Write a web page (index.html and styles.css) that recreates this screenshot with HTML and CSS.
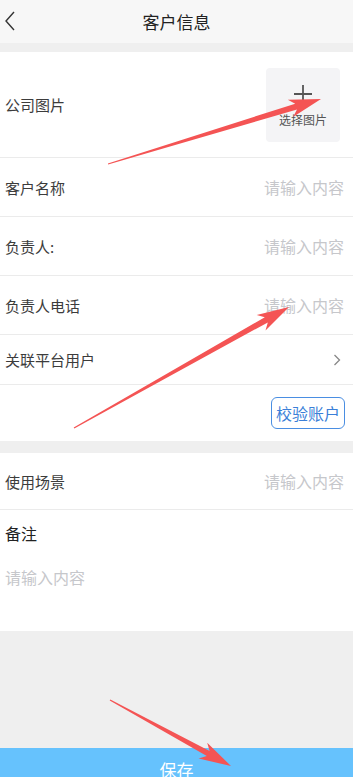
FILE: index.html
```html
<!DOCTYPE html>
<html lang="zh-CN">

<head>
    <meta charset="UTF-8" />
    <meta name="viewport" content="width=device-width, initial-scale=1" />
    <title>客户信息</title>
    <link rel="stylesheet" href="styles.css">
</head>

<body>
    <div class="page">
        <div class="nav">
            <span class="back">
                <svg width="12" height="20" viewBox="0 0 12 20"><path d="M10 1 L2 10 L10 19" fill="none" stroke="#333" stroke-width="1.4" /></svg>
            </span>
            <span class="nav-title">客户信息</span>
        </div>

        <div class="group">
            <div class="row row-pic">
                <span class="label">公司图片</span>
                <div class="pic-box">
                    <svg class="plus" width="18" height="18" viewBox="0 0 18 18"><path d="M9 0 V18 M0 9 H18" fill="none" stroke="#555" stroke-width="1.8" /></svg>
                    <span class="pic-text">选择图片</span>
                </div>
            </div>
            <div class="row"><span class="label">客户名称</span><span class="ph">请输入内容</span></div>
            <div class="row"><span class="label">负责人:</span><span class="ph">请输入内容</span></div>
            <div class="row"><span class="label">负责人电话</span><span class="ph">请输入内容</span></div>
            <div class="row row-link">
                <span class="label">关联平台用户</span>
                <svg width="8" height="12" viewBox="0 0 8 12"><path d="M1.5 1 L6.5 6 L1.5 11" fill="none" stroke="#888" stroke-width="1.3" /></svg>
            </div>
            <div class="row row-btn"><span class="check-btn">校验账户</span></div>
        </div>

        <div class="group group-2">
            <div class="row row-scene"><span class="label">使用场景</span><span class="ph">请输入内容</span></div>
            <div class="remark">
                <div class="remark-title">备注</div>
                <div class="ph">请输入内容</div>
            </div>
        </div>

        <div class="save">保存</div>

        <!-- 注釈の矢印 -->
        <svg class="marks" width="353" height="777" viewBox="0 0 353 777">
            <polygon fill="#f45454" points="108.1,164.5 297.0,109.5 293.0,116.9 321,99 287.8,99.7 295.2,103.7 107.9,163.5" />
            <polygon fill="#f45454" points="74.3,428.5 267.8,322.4 265.5,330.5 289,307 256.7,314.9 264.8,317.2 73.7,427.5" />
            <polygon fill="#f45454" points="109.7,700.5 206.8,756.1 198.6,758.6 231,766 207.2,742.8 209.6,750.9 110.3,699.5" />
        </svg>
    </div>
</body>

</html>
```

FILE: styles.css
```css
html,
body {
    margin: 0;
    padding: 0;
    height: 777px;
    overflow: hidden;
}

body {
    background: #efefef;
    font-family: "Noto Sans CJK SC", "Noto Sans", sans-serif;
    color: #3a3a3a;
}

.page {
    position: relative;
    width: 353px;
}

.nav {
    position: relative;
    height: 43px;
    background: #f7f7f7;
    display: flex;
    align-items: center;
    justify-content: center;
}

.back {
    position: absolute;
    left: 4px;
    top: 11px;
}

.nav-title {
    font-size: 17px;
    color: #222;
}

.group {
    margin-top: 9px;
    background: #fff;
}

.group-2 {
    margin-top: 12px;
}

.row {
    display: flex;
    align-items: center;
    justify-content: space-between;
    height: 58px;
    padding: 0 9px 0 5px;
    border-bottom: 1px solid #ebebeb;
    font-size: 15px;
}

.label {
    color: #3c3c3c;
}

.ph {
    color: #c6c7cb;
    font-size: 16px;
}

.row-pic {
    height: 105px;
    padding-right: 13px;
}

.pic-box {
    width: 74px;
    height: 74px;
    background: #f4f4f6;
    border-radius: 4px;
    display: flex;
    flex-direction: column;
    align-items: center;
    justify-content: center;
}

.plus {
    margin-top: 4px;
}

.pic-text {
    font-size: 12px;
    color: #555;
    margin-top: 8px;
}

.row-link {
    height: 49px;
    padding-right: 12px;
}

.row-btn {
    height: 56px;
    justify-content: flex-end;
    padding-right: 8px;
    border-bottom: none;
}

.check-btn {
    display: inline-block;
    height: 30px;
    line-height: 30px;
    padding: 0 4px;
    border: 1px solid #4a8ee2;
    border-radius: 6px;
    color: #3b7fd8;
    font-size: 16px;
}

.row-scene {
    height: 56px;
}

.remark {
    height: 121px;
    padding: 0 5px;
}

.remark-title {
    padding-top: 11px;
    font-size: 16px;
    color: #222;
}

.remark .ph {
    margin-top: 20px;
}

.save {
    margin-top: 117px;
    height: 44px;
    line-height: 44px;
    background: #66c2fd;
    color: #fff;
    text-align: center;
    font-size: 17px;
}

.marks {
    position: absolute;
    left: 0;
    top: 0;
    pointer-events: none;
}
```
